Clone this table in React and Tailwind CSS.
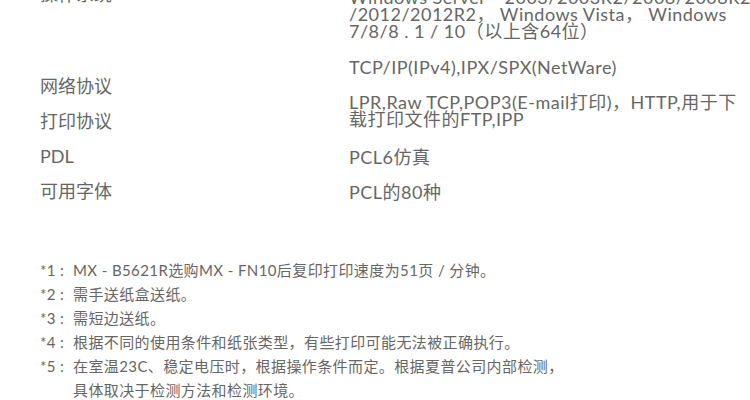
import React from "react";

const labels = ["网络协议", "打印协议", "PDL", "可用字体"];

const notes = [
  ["*1", "MX - B5621R选购MX - FN10后复印打印速度为51页 / 分钟。"],
  ["*2", "需手送纸盒送纸。"],
  ["*3", "需短边送纸。"],
  ["*4", "根据不同的使用条件和纸张类型，有些打印可能无法被正确执行。"],
  ["*5", "在室温23C、稳定电压时，根据操作条件而定。根据夏普公司内部检测，", "具体取决于检测方法和检测环境。"],
];

export default function App() {
  return (
    <div className="w-[750px] h-[400px] overflow-hidden bg-white text-[#666] font-['Lato','Noto_Sans_CJK_SC',sans-serif]">
      {/* spec table, scrolled so the first row is cut */}
      <div className="-mt-[23px] pl-[40px] flex">
        <div className="w-[309px] shrink-0 text-[18px] leading-[35px]">
          <div className="h-[92px]">操作系统</div>
          {labels.map((l) => (
            <div key={l}>{l}</div>
          ))}
        </div>
        <div className="flex-1 text-[18px] leading-[17px] tracking-[0.5px] whitespace-nowrap">
          <div className="mt-[12px]">
            <div>Windows Server　2003/2003R2/2008/2008R2</div>
            <div>/2012/2012R2， Windows Vista， Windows</div>
            <div>7/8/8 . 1 / 10（以上含64位）</div>
          </div>
          <div className="mt-[19px]">TCP/IP(IPv4),IPX/SPX(NetWare)</div>
          <div className="mt-[18px]">
            <div>LPR,Raw TCP,POP3(E-mail打印)，HTTP,用于下</div>
            <div>载打印文件的FTP,IPP</div>
          </div>
          <div className="mt-[21px]">PCL6仿真</div>
          <div className="mt-[18px]">PCL的80种</div>
        </div>
      </div>

      {/* footnotes */}
      <div className="mt-[49px] pl-[40px] text-[15px] leading-[24px] tracking-[0.4px]">
        {notes.map(([mark, ...lines]) => (
          <div key={mark} className="flex">
            <span className="w-[33px] shrink-0 whitespace-pre">{mark + " : "}</span>
            <div>
              {lines.map((t) => (
                <div key={t}>{t}</div>
              ))}
            </div>
          </div>
        ))}
      </div>
    </div>
  );
}
